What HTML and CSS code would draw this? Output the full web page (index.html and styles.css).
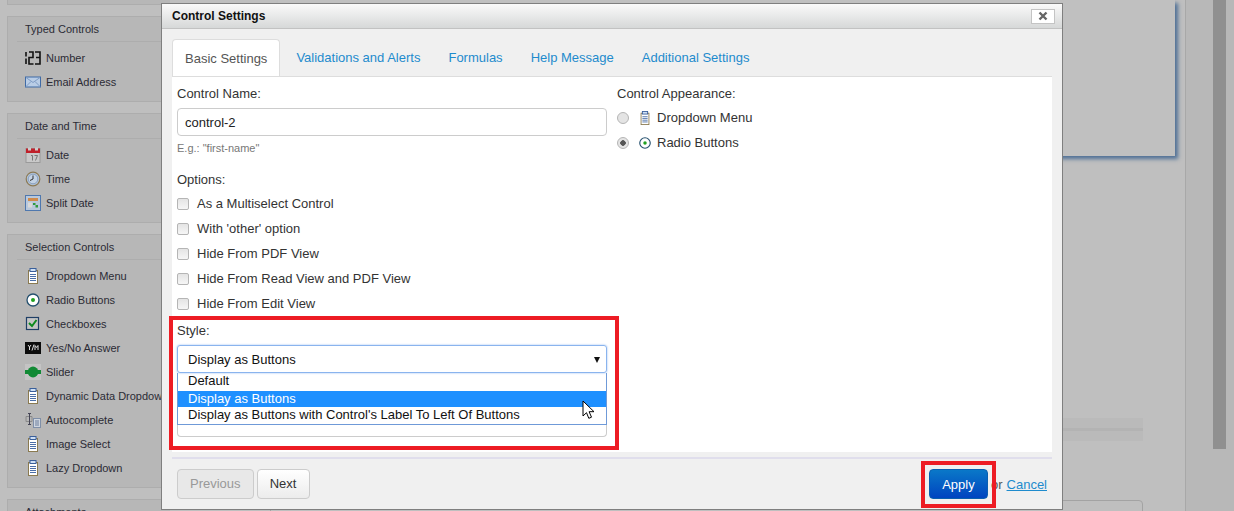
FILE: index.html
```html
<!DOCTYPE html>
<html lang="en">
<head>
    <meta charset="UTF-8">
    <title>Control Settings</title>
    <link rel="stylesheet" href="styles.css">
</head>
<body>
    <svg class="defs" width="0" height="0">
        <symbol id="ic-dropdown" viewBox="0 0 16 16">
            <rect x="3.5" y="2.5" width="9" height="13" fill="#fff" stroke="#8a7a50"/>
            <rect x="5" y="0.5" width="6" height="3" fill="#cfe0f5" stroke="#3a5f9a"/>
            <path d="M5 6.500h6M5 8.500h6M5 10.500h6M5 12.500h6" stroke="#4a6ea8"/>
        </symbol>
        <symbol id="ic-radio" viewBox="0 0 16 16">
            <circle cx="8" cy="8" r="6" fill="#fff" stroke="#24506e" stroke-width="1.3"/>
            <circle cx="8" cy="8" r="2" fill="#1fa01f"/>
        </symbol>
    </svg>

    <div class="page">
        <aside class="sidebar">
            <section class="box box-cut"></section>
            <section class="box">
                <h4>Typed Controls</h4>
                <ul>
                    <li>
                        <svg class="icon" viewBox="0 0 16 16"><path d="M1 2v4.500M1 8.500V14M4 2h4v5.500H4V14h4.500M10 2h5v5.500h-4M15 8v6h-5" fill="none" stroke="#111" stroke-width="1.6"/></svg>
                        Number
                    </li>
                    <li>
                        <svg class="icon" viewBox="0 0 16 16"><rect x="0.5" y="3" width="15" height="10" fill="#b9cde6" stroke="#3f6aa5"/><path d="M1 3.500l7 5 7-5M1 12.500l5-5M15 12.500l-5-5" fill="none" stroke="#7f9cc4"/></svg>
                        Email Address
                    </li>
                </ul>
            </section>
            <section class="box">
                <h4>Date and Time</h4>
                <ul>
                    <li>
                        <svg class="icon" viewBox="0 0 16 16"><rect x="1" y="1.500" width="14" height="14" fill="#c9c9c9" stroke="#9a9a9a"/><rect x="1" y="1.500" width="14" height="4.500" fill="#c0202a"/><rect x="3" y="0.500" width="3" height="3" fill="#ccc"/><rect x="10" y="0.500" width="3" height="3" fill="#ccc"/><path d="M6 8.500h1.500v5M9.500 8.500h3l-2 5" fill="none" stroke="#777"/></svg>
                        Date
                    </li>
                    <li>
                        <svg class="icon" viewBox="0 0 16 16"><circle cx="8" cy="8" r="6.800" fill="#b2c3d8" stroke="#8c7a55" stroke-width="1.2"/><circle cx="8" cy="8" r="4.800" fill="#c3d2e4" stroke="#6a85a8" stroke-width=".6"/><path d="M8 4.500V8L5 9.500" fill="none" stroke="#333"/></svg>
                        Time
                    </li>
                    <li>
                        <svg class="icon" viewBox="0 0 16 16"><rect x="0.5" y="0.5" width="15" height="15" fill="#b8c8dc" stroke="#4f78ae"/><rect x="3" y="3" width="10" height="3" fill="#d08a4a"/><path d="M3 7.500h4v5H3z" fill="#d9d9d9"/><path d="M8 8h2.500v2H8z" fill="#2f9a3f"/><path d="M10.500 10H13v2.500h-2.500z" fill="#2f9a3f"/></svg>
                        Split Date
                    </li>
                </ul>
            </section>
            <section class="box">
                <h4>Selection Controls</h4>
                <ul>
                    <li><svg class="icon"><use href="#ic-dropdown"/></svg> Dropdown Menu</li>
                    <li><svg class="icon"><use href="#ic-radio"/></svg> Radio Buttons</li>
                    <li>
                        <svg class="icon" viewBox="0 0 16 16"><rect x="1.500" y="1.500" width="12" height="12" fill="#c6c6c6" stroke="#1f3f66" stroke-width="1.2"/><path d="M4 7l3 3 4.500-6" fill="none" stroke="#0d8a1e" stroke-width="2"/></svg>
                        Checkboxes
                    </li>
                    <li>
                        <svg class="icon" viewBox="0 0 16 16"><rect x="0" y="2" width="16" height="12" fill="#0c0c0c"/><path d="M3 5l1.500 2L6 5M4.500 7v3M7 10.500l2-6M10 10V5.500l1.500 2 1.500-2V10" fill="none" stroke="#ddd"/></svg>
                        Yes/No Answer
                    </li>
                    <li>
                        <svg class="icon" viewBox="0 0 16 16"><rect width="16" height="16" fill="#c4c4c4"/><rect y="6" width="16" height="4" fill="#128a35"/><circle cx="8" cy="8" r="5.400" fill="#128a35"/></svg>
                        Slider
                    </li>
                    <li><svg class="icon"><use href="#ic-dropdown"/></svg> Dynamic Data Dropdown</li>
                    <li>
                        <svg class="icon" viewBox="0 0 16 16"><path d="M1 4.500h6M1 9.500h6M1 4.500v5M7 4.500v5" fill="none" stroke="#8a8a8a"/><path d="M3 1.500h3M3 12.500h3M4.500 1.500v11" fill="none" stroke="#445"/><rect x="8.500" y="6.500" width="7" height="9" fill="#cfd6e0" stroke="#7f8fa8"/><path d="M10 9h4M10 11h4M10 13h4" stroke="#6d7f9c"/></svg>
                        Autocomplete
                    </li>
                    <li><svg class="icon"><use href="#ic-dropdown"/></svg> Image Select</li>
                    <li><svg class="icon"><use href="#ic-dropdown"/></svg> Lazy Dropdown</li>
                </ul>
            </section>
            <section class="box">
                <h4>Attachments</h4>
            </section>
        </aside>

        <main class="content">
            <div class="card"></div>
            <div class="stripe"></div>
            <div class="lower-box"></div>
        </main>

        <div class="rail">
            <div class="scrollbar"></div>
        </div>
    </div>

    <div class="dialog">
        <header class="dialog-title">
            <span>Control Settings</span>
            <button class="close" type="button">
                <svg width="10" height="10" viewBox="0 0 10 10"><path d="M1.500 1.500l7 7M8.500 1.500l-7 7" stroke="#666" stroke-width="2.400"/></svg>
            </button>
        </header>
        <div class="dialog-body">
            <nav class="tabs">
                <a class="tab active">Basic Settings</a>
                <a class="tab">Validations and Alerts</a>
                <a class="tab">Formulas</a>
                <a class="tab">Help Message</a>
                <a class="tab">Additional Settings</a>
            </nav>
            <div class="panel">
                <div class="col-left">
                    <label class="field-label">Control Name:</label>
                    <div class="input">control-2</div>
                    <p class="hint">E.g.: "first-name"</p>
                    <label class="field-label options-label">Options:</label>
                    <div class="check"><span class="checkbox"></span>As a Multiselect Control</div>
                    <div class="check"><span class="checkbox"></span>With 'other' option</div>
                    <div class="check"><span class="checkbox"></span>Hide From PDF View</div>
                    <div class="check"><span class="checkbox"></span>Hide From Read View and PDF View</div>
                    <div class="check"><span class="checkbox"></span>Hide From Edit View</div>
                    <label class="field-label style-label">Style:</label>
                    <div class="select-wrap">
                        <div class="select">Display as Buttons<span class="caret"></span></div>
                        <ul class="select-list">
                            <li>Default</li>
                            <li class="selected">Display as Buttons</li>
                            <li>Display as Buttons with Control's Label To Left Of Buttons</li>
                        </ul>
                    </div>
                </div>
                <div class="col-right">
                    <label class="field-label">Control Appearance:</label>
                    <div class="appearance">
                        <span class="radio"></span>
                        <svg class="icon"><use href="#ic-dropdown"/></svg>
                        Dropdown Menu
                    </div>
                    <div class="appearance">
                        <span class="radio on"></span>
                        <svg class="icon"><use href="#ic-radio"/></svg>
                        Radio Buttons
                    </div>
                </div>
            </div>
            <footer class="dialog-foot">
                <button class="btn" type="button" disabled>Previous</button>
                <button class="btn btn-next" type="button">Next</button>
                <div class="foot-right">
                    <button class="btn-primary" type="button">Apply</button>
                    <span class="or">or</span>
                    <a class="cancel">Cancel</a>
                </div>
            </footer>
        </div>
    </div>

    <div class="mark mark-style"></div>
    <div class="mark mark-apply"></div>
    <svg class="cursor" width="14" height="20" viewBox="0 0 14 20"><path d="M1 1v15l3.500-3.300 2.300 5.600 2.700-1.100-2.400-5.500H12z" fill="#fff" stroke="#000"/></svg>
</body>
</html>
```

FILE: styles.css
```css
* {
    box-sizing: border-box;
}

html, body {
    margin: 0;
    padding: 0;
    height: 511px;
    overflow: hidden;
}

body {
    font-family: "Liberation Sans", Arial, sans-serif;
    background-color: #bfbfbf;
    color: #333;
}

.defs {
    position: absolute;
}

.page {
    display: grid;
    grid-template-columns: 170px 1fr 49px;
    height: 511px;
}

/* sidebar behind the overlay */
.sidebar {
    padding-left: 7px;
    display: flex;
    flex-direction: column;
    gap: 11px;
}

.box {
    flex: none;
    background-color: #b7b7b7;
    border: 1px solid #adadad;
    border-right: none;
    padding: 0 0 0 9px;
    font-size: 11px;
    color: #2b2b35;
}

.box-cut {
    height: 5px;
    border-top: none;
}

.box h4 {
    margin: 0;
    height: 25px;
    padding-left: 8px;
    font-size: 11px;
    font-weight: normal;
    line-height: 25px;
    border-bottom: 1px solid #adadad;
}

.box ul {
    list-style: none;
    margin: 0;
    padding: 4px 0 7px 0;
}

.box li {
    display: flex;
    align-items: center;
    gap: 5px;
    height: 24px;
    white-space: nowrap;
    padding-left: 8px;
}

.icon {
    flex: none;
    width: 16px;
    height: 16px;
}

.content {
    position: relative;
}

.card {
    height: 156px;
    margin-left: 108px;
    width: 897px;
    background-color: #c0c0c0;
    box-shadow: 3px 3px 4px #4f7096;
}

.stripe {
    margin-top: 262px;
    margin-left: 100px;
    width: 873px;
    height: 23px;
    background: linear-gradient(#bababa 0 10px, #b3b3b3 10px 13px, #bababa 13px);
}

.lower-box {
    margin-top: 59px;
    margin-left: 100px;
    width: 873px;
    height: 30px;
    border: 1px solid #a3a3a3;
    border-radius: 4px;
}

.rail {
    background-color: #b8b8b8;
    border-left: 1px solid #a8a8a8;
    margin-right: 0;
    padding-left: 27px;
    padding-right: 8px;
}

.scrollbar {
    height: 449px;
    background-color: #909090;
}

/* dialog */
.dialog {
    position: absolute;
    left: 161px;
    top: 3px;
    width: 902px;
    height: 507px;
    border: 1px solid #7f7f7f;
    background-color: #f0f0f0;
    display: flex;
    flex-direction: column;
}

.dialog-title {
    flex: none;
    height: 25px;
    display: flex;
    align-items: center;
    justify-content: space-between;
    padding: 0 7px 0 10px;
    font-size: 12px;
    font-weight: bold;
    color: #111;
    background: linear-gradient(#fafafa, #d6d8d8);
    border-bottom: 1px solid #c2c2c2;
}

.close {
    width: 24px;
    height: 15px;
    padding: 0;
    background-color: #fff;
    border: 1px solid #c4c4c4;
    display: flex;
    align-items: center;
    justify-content: center;
}

.dialog-body {
    flex: 1;
    padding: 10px 10px 0 10px;
    display: flex;
    flex-direction: column;
}

.tabs {
    display: flex;
    height: 37px;
    font-size: 13px;
}

.tab {
    padding: 0 14px;
    line-height: 37px;
    color: #1e8bcd;
}

.tab.active {
    margin-right: 2px;
    padding: 0 12px;
    color: #555;
    background-color: #fff;
    border: 1px solid #ddd;
    border-bottom: none;
    border-radius: 4px 4px 0 0;
}

.panel {
    height: 376px;
    background-color: #fff;
    border-top: 1px solid #ddd;
    padding: 0 5px;
    display: flex;
    font-size: 13px;
}

.col-left {
    width: 430px;
    margin-right: 10px;
}

.field-label {
    display: block;
    height: 16px;
    line-height: 16px;
    margin-top: 9px;
}

.input {
    height: 28px;
    margin-top: 6px;
    padding-left: 7px;
    line-height: 27px;
    color: #222;
    border: 1px solid #ccc;
    border-radius: 4px;
}

.hint {
    margin: 5px 0 0 0;
    font-size: 11px;
    line-height: 14px;
    color: #777;
}

.options-label {
    margin-top: 17px;
}

.check {
    display: flex;
    align-items: center;
    height: 25px;
}

.options-label + .check {
    margin-top: 3px;
}

.checkbox {
    width: 12px;
    height: 12px;
    margin-right: 8px;
    background: linear-gradient(#e4e4e4, #f6f6f6);
    border: 1px solid #b5b5b5;
    border-radius: 2px;
}

.style-label {
    margin-top: 7px;
}

.select-wrap {
    position: relative;
    height: 92px;
    margin-top: 6px;
}

.select {
    height: 28px;
    padding-left: 10px;
    line-height: 27px;
    color: #111;
    border: 1px solid #8ab4ee;
    border-radius: 3px;
    box-shadow: 0 0 2px #8ab4ee;
    position: relative;
}

.caret {
    position: absolute;
    right: 6px;
    top: 11px;
    border-left: 3px solid transparent;
    border-right: 3px solid transparent;
    border-top: 6px solid #111;
}

.select-list {
    position: absolute;
    left: 0;
    right: 0;
    top: 28px;
    height: 64px;
    margin: 0;
    padding: 0;
    list-style: none;
    color: #111;
    border: 1px solid #ccc;
    border-top: none;
    border-radius: 0 0 4px 4px;
}

.select-list li {
    height: 18px;
    line-height: 16px;
    padding-left: 10px;
    border-left: 1px solid #6f9ad8;
    border-right: 1px solid #6f9ad8;
    margin: 0 -1px;
}

.select-list li:last-child {
    border-bottom: 1px solid #6f9ad8;
}

.select-list .selected {
    height: 16px;
    line-height: 15px;
    color: #fff;
    background-color: #1e90ff;
}

.appearance {
    display: flex;
    align-items: center;
    height: 25px;
}

.col-right .field-label + .appearance {
    margin-top: 3px;
}

.radio {
    width: 12px;
    height: 12px;
    margin-right: 9px;
    background: #e4e4e4;
    border: 1px solid #b5b5b5;
    border-radius: 50%;
}

.radio.on {
    background: radial-gradient(circle, #555 0 2.5px, #e4e4e4 3px);
}

.appearance .icon {
    width: 14px;
    height: 14px;
    margin-right: 5px;
}

.dialog-foot {
    flex: 1;
    margin-top: 5px;
    border-top: 2px solid #e0deec;
    padding: 10px 5px 0 5px;
    display: flex;
    align-items: flex-start;
    gap: 3px;
}

.btn {
    height: 30px;
    padding: 0 12px 2px;
    font: 13px "Liberation Sans", Arial, sans-serif;
    color: #333;
    background: linear-gradient(#fff, #ececec);
    border: 1px solid #ccc;
    border-radius: 4px;
}

.btn-next {
    width: 53px;
}

.btn:disabled {
    color: #999;
    background: #e8e8e8;
}

.foot-right {
    margin-left: auto;
    display: flex;
    align-items: center;
    height: 30px;
    font-size: 13px;
}

.btn-primary {
    width: 59px;
    height: 30px;
    padding: 0;
    font: 13px "Liberation Sans", Arial, sans-serif;
    color: #fff;
    background: linear-gradient(#0a78c8, #0044c0);
    border: 1px solid #0a5fb0;
    border-radius: 4px;
}

.or {
    margin-left: 3px;
    color: #555;
}

.cancel {
    margin-left: 4px;
    color: #1e8bcd;
    text-decoration: underline;
}

/* red highlights drawn on top of the screenshot */
.mark {
    position: absolute;
    border: 4px solid #ed1c24;
}

.mark-style {
    left: 169px;
    top: 316px;
    width: 450px;
    height: 134px;
}

.mark-apply {
    left: 921px;
    top: 461px;
    width: 75px;
    height: 47px;
}

.cursor {
    position: absolute;
    left: 582px;
    top: 400px;
}
```
